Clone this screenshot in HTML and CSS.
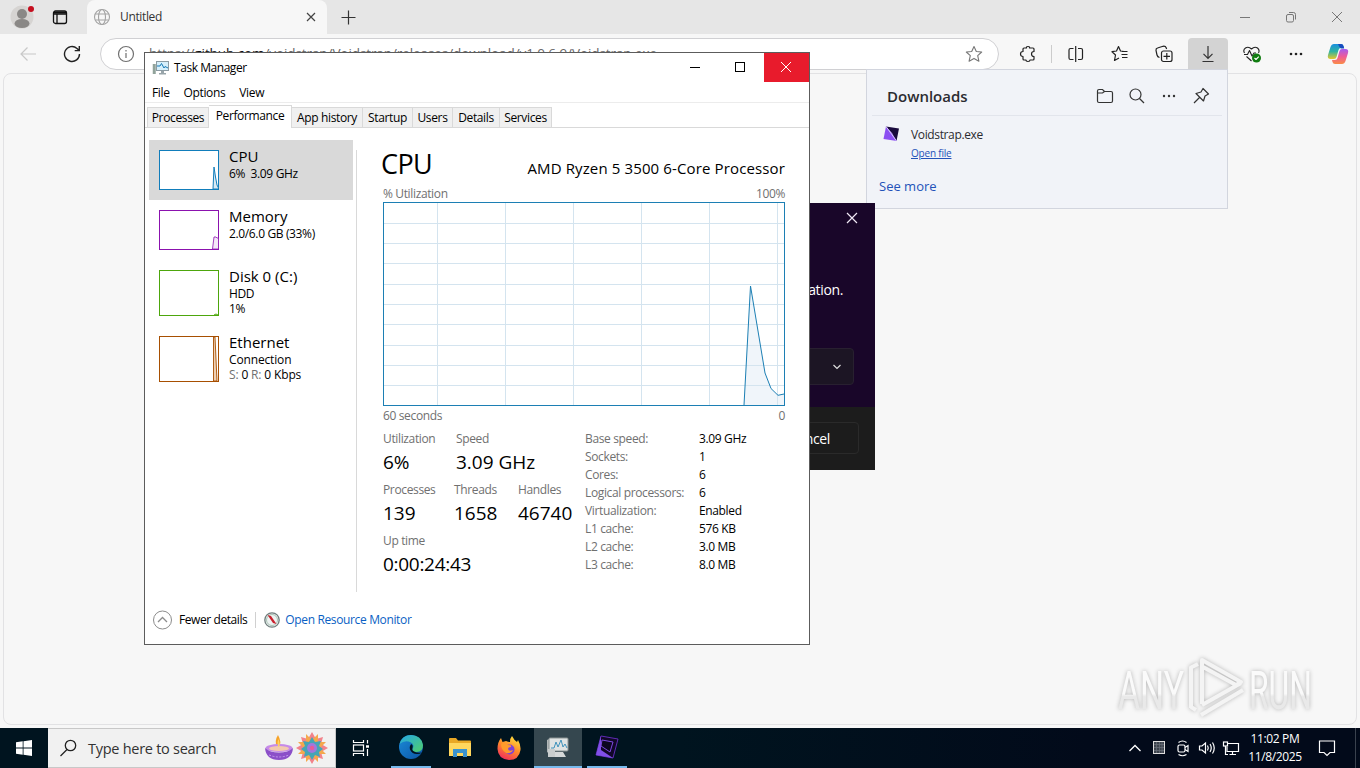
FILE: index.html
```html
<!DOCTYPE html>
<html lang="en">
    <head>
        <meta charset="utf-8">
        <title>Desktop</title>
        <link rel="stylesheet" href="styles.css">
    </head>
    <body>
        <!-- Browser -->
        <div class="browser">
            <div class="tabbar">
                <svg class="avatar" width="26" height="28" viewBox="0 0 26 28"><circle cx="13" cy="14" r="11.500" fill="#d6d4d2"/><circle cx="13" cy="11" r="5" fill="#8a8886"/><ellipse cx="13" cy="20.500" rx="7.500" ry="4.500" fill="#8a8886"/><circle cx="22" cy="6" r="3" fill="#c50f1f"/></svg>
                <svg class="workspaces" width="16" height="16" viewBox="0 0 16 16" fill="none" stroke="#111" stroke-width="1.300"><rect x="1.500" y="2" width="13" height="12.500" rx="2"/><path d="M1.500 5H14.500M5 5V14.500"/><path d="M2 3.500H14" stroke-width="2"/></svg>
                <div class="tab">
                    <svg width="18" height="18" viewBox="0 0 18 18" fill="none" stroke="#a3a3a3" stroke-width="1.100"><circle cx="9" cy="9" r="7.500"/><ellipse cx="9" cy="9" rx="3.500" ry="7.500"/><path d="M2.300 6H15.700M2.300 12H15.700"/></svg>
                    <span class="tab-title">Untitled</span>
                    <svg width="10" height="10" viewBox="0 0 10 10" stroke="#444" stroke-width="1.200"><path d="M1 1L9 9M9 1L1 9"/></svg>
                </div>
                <svg class="newtab" width="15" height="15" viewBox="0 0 15 15" stroke="#333" stroke-width="1.200"><path d="M7.500 .5V14.500M.5 7.500H14.500"/></svg>
                <div class="winbtns">
                    <svg width="12" height="12" viewBox="0 0 12 12" stroke="#777" fill="none"><path d="M1 6.500H11"/></svg>
                    <svg width="12" height="12" viewBox="0 0 12 12" stroke="#777" fill="none"><rect x="1.500" y="3.500" width="7" height="7.500" rx="1.500"/><path d="M4 1.500H8.500Q10.500 1.500 10.500 3.500V8.500"/></svg>
                    <svg width="12" height="12" viewBox="0 0 12 12" stroke="#777" fill="none"><path d="M1 1L11 11M11 1L1 11"/></svg>
                </div>
            </div>
            <div class="toolbar">
                <svg class="back" width="18" height="16" viewBox="0 0 18 16" fill="none" stroke="#c8c8c8" stroke-width="1.200"><path d="M17 8H2M8.500 1.500L2 8L8.500 14.500"/></svg>
                <svg class="reload" width="18" height="18" viewBox="0 0 18 18" fill="none" stroke="#222" stroke-width="1.400"><path d="M16.500 9A7.500 7.500 0 1 1 14 3.400L16 5.300M16.300 1V5.600H11.700"/></svg>
                <div class="address">
                    <svg width="18" height="18" viewBox="0 0 18 18" fill="none" stroke="#707070" stroke-width="1.200"><circle cx="9" cy="9" r="7.500"/><path d="M9 8V13M9 5V6.500"/></svg>
                    <span class="url">https://<b>github.com</b>/voidstrap/Voidstrap/releases/download/v1.0.6.9/Voidstrap.exe</span>
                    <svg width="18" height="18" viewBox="0 0 18 18" fill="none" stroke="#777" stroke-width="1.100" stroke-linejoin="round"><path d="M9 1.500L11.300 6.500L16.700 7L12.700 10.700L13.900 16.200L9 13.400L4.100 16.200L5.300 10.700L1.300 7L6.700 6.500Z"/></svg>
                </div>
                <div class="tools">
                    <span class="tool"><svg width="18" height="18" viewBox="0 0 18 18" fill="none" stroke="#222" stroke-width="1.200" stroke-linejoin="round"><path d="M5 3H7.500Q7 1.500 9 1.500T10.500 3H14Q15 3 15 4V6.500Q12.500 6.500 12.500 9T15 11.500V14Q15 15 14 15H11Q11 16.500 9 16.500T7 15H5Q4 15 4 14V11.500Q1.500 11.500 1.500 9T4 6.500V4Q4 3 5 3Z"/></svg></span>
                    <i class="sep"></i>
                    <span class="tool"><svg width="18" height="18" viewBox="0 0 18 18" fill="none" stroke="#222" stroke-width="1.200"><path d="M6.500 3.500H3.500Q2 3.500 2 5V13Q2 14.500 3.500 14.500H6.500M11 3.500H14Q15.500 3.500 15.500 5V13Q15.500 14.500 14 14.500H11M8.700 1V17"/></svg></span>
                    <span class="tool"><svg width="18" height="18" viewBox="0 0 18 18" fill="none" stroke="#222" stroke-width="1.200" stroke-linejoin="round"><path d="M13 6.500L9.500 6L7.500 1.500L5.500 6L1 6.700L4.500 10L3.500 15.500L8 13M11 6.500H16.500M10.500 9.500H16.500M11 12.500H16.500"/></svg></span>
                    <span class="tool"><svg width="18" height="18" viewBox="0 0 18 18" fill="none" stroke="#222" stroke-width="1.200"><rect x="6.500" y="6" width="10.500" height="10.500" rx="2"/><path d="M4.500 12.500Q2.500 12 2 10L1 5.500Q.7 3.500 2.500 3L8 1.300Q10.500 .8 11.300 3L11.600 4M11.800 8V14.500M8.500 11.300H15"/></svg></span>
                    <span class="tool active"><svg width="18" height="18" viewBox="0 0 18 18" fill="none" stroke="#333" stroke-width="1.200"><path d="M9 1V13M4.500 8.800L9 13.300L13.500 8.800M3.500 16.500H14.500"/></svg></span>
                    <span class="tool"><svg width="20" height="18" viewBox="0 0 20 18" fill="none" stroke="#222" stroke-width="1.100" stroke-linejoin="round"><path d="M2.500 8Q.7 5 3.500 3Q6.500 1 9.500 4Q12.500 1 15.500 3Q18 5 16.500 8M2 9.500H5.500L7.500 5.500L10 11L12 8H14M4.500 11.500L9.500 16"/><circle cx="14.500" cy="13" r="4.500" fill="#107c10" stroke="none"/><path d="M12.500 13L14 14.500L16.800 11.700" stroke="#fff"/></svg></span>
                    <span class="tool"><svg width="16" height="4" viewBox="0 0 16 4" fill="#222"><circle cx="3" cy="2" r="1.300"/><circle cx="8" cy="2" r="1.300"/><circle cx="13" cy="2" r="1.300"/></svg></span>
                    <span class="tool copilot"><svg width="22" height="22" viewBox="0 0 22 22"><defs><linearGradient id="cpA" x1="0" y1="0" x2="0" y2="1"><stop offset="0" stop-color="#1a8fe0"/><stop offset=".5" stop-color="#30b4a0"/><stop offset="1" stop-color="#e8c82c"/></linearGradient><linearGradient id="cpB" x1="0" y1="0" x2="0" y2="1"><stop offset="0" stop-color="#a55cf0"/><stop offset=".5" stop-color="#ee5c98"/><stop offset="1" stop-color="#fa8c46"/></linearGradient></defs><path d="M7 1H14Q16 1 16.500 3L17 5H14Q12 5 11.500 7L9.500 14Q9 16 7 16H3.500Q0 16 1 12L3.500 4Q4.500 1 7 1Z" fill="url(#cpA)"/><path d="M11 1H14Q16 1 16.500 3L17.200 5.500H14Q12.500 5 11 1Z" fill="#174cbe"/><path d="M15 6H18.500Q22 6 21 10L18.500 18Q17.500 21 15 21H8Q6 21 5.500 19L5 17H8Q10 17 10.500 15L12.500 8Q13 6 15 6Z" fill="url(#cpB)"/></svg></span>
                </div>
            </div>
            <div class="page"></div>
        </div>

        <!-- Downloads flyout -->
        <div class="downloads">
            <div class="dl-head">
                <h2>Downloads</h2>
                <svg width="18" height="18" viewBox="0 0 18 18" fill="none" stroke="#333" stroke-width="1.200"><path d="M1.500 4Q1.500 2.500 3 2.500H6.500L8.500 4.500H15Q16.500 4.500 16.500 6V14Q16.500 15.500 15 15.500H3Q1.500 15.500 1.500 14ZM1.500 6H6.500L8.500 4.500"/></svg>
                <svg width="18" height="18" viewBox="0 0 18 18" fill="none" stroke="#333" stroke-width="1.200"><circle cx="7.500" cy="7.500" r="5.500"/><path d="M11.500 11.500L16 16"/></svg>
                <svg width="18" height="18" viewBox="0 0 18 18" fill="#333"><circle cx="4" cy="9" r="1.200"/><circle cx="9" cy="9" r="1.200"/><circle cx="14" cy="9" r="1.200"/></svg>
                <svg width="18" height="18" viewBox="0 0 18 18" fill="none" stroke="#333" stroke-width="1.200" stroke-linejoin="round"><path d="M11 1.500L16.500 7L13 9L11.500 14L4 6.500L9 5ZM7.500 10.500L2 16"/></svg>
            </div>
            <div class="dl-item">
                <svg width="18" height="18" viewBox="0 0 18 18"><path d="M4 1.500L10 8L15 16L1.500 14Z" fill="#8c4ff2"/><path d="M4 1.500L17 3.500L14.500 16L10 8Z" fill="#190a3d"/><path d="M4 1.500L14.500 16" stroke="#d9c7ff"/></svg>
                <div>
                    <div class="dl-name">Voidstrap.exe</div>
                    <a class="dl-open">Open file</a>
                </div>
            </div>
            <a class="dl-more">See more</a>
        </div>

        <!-- Installer dialog, mostly under the task manager -->
        <div class="dialog">
            <svg class="dlg-close" width="12" height="12" viewBox="0 0 12 12" stroke="#f0e8f5" stroke-width="1.200"><path d="M1 1L11 11M11 1L1 11"/></svg>
            <p class="dlg-text">application.</p>
            <div class="dlg-select"><svg width="8" height="6" viewBox="0 0 8 6" fill="none" stroke="#ddd" stroke-width="1.200"><path d="M.5 1L4 4.500L7.500 1"/></svg></div>
            <div class="dlg-foot"><span class="dlg-btn">Cancel</span></div>
        </div>

        <!-- Task manager -->
        <div class="taskmgr">
            <div class="tm-title">
                <svg width="17" height="16" viewBox="0 0 17 16"><rect x="4.500" y="1.500" width="12" height="9" fill="#d5effb" stroke="#8b9ba3"/><path d="M5 6H8L9.500 3.500L12 8L13 6.500L16 8" fill="none" stroke="#1679b5"/><path d="M9 11H12V13H14V14.500H7V13H9Z" fill="#99a5aa"/><path d="M1.500 4V14M3 4V14" stroke="#91a39b" stroke-width="1.500"/></svg>
                <span>Task Manager</span>
                <div class="tm-btns">
                    <i><svg width="12" height="12" viewBox="0 0 12 12" stroke="#000"><path d="M1 6.500H11"/></svg></i>
                    <i><svg width="12" height="12" viewBox="0 0 12 12" stroke="#000" fill="none"><rect x="1.500" y="1.500" width="9" height="9"/></svg></i>
                    <i class="close"><svg width="12" height="12" viewBox="0 0 12 12" stroke="#fff"><path d="M1 1L11 11M11 1L1 11"/></svg></i>
                </div>
            </div>
            <div class="tm-menu"><span>File</span><span>Options</span><span>View</span></div>
            <div class="tm-tabs">
                <span class="t1">Processes</span><span class="t2 on">Performance</span><span class="t3">App history</span><span class="t4">Startup</span><span class="t5">Users</span><span class="t6">Details</span><span class="t7">Services</span>
            </div>
            <div class="tm-body">
                <div class="side">
                    <div class="res selected">
                        <svg width="60" height="40" viewBox="0 0 60 40"><rect x=".5" y=".5" width="59" height="39" fill="#fff" stroke="#117dbb"/><path d="M54 39L55 17L56.500 27L58 35L59.500 38V39Z" fill="#d9eaf4" stroke="#117dbb"/></svg>
                        <div><h3>CPU</h3><p>6%&nbsp; 3.09 GHz</p></div>
                    </div>
                    <div class="res">
                        <svg width="60" height="40" viewBox="0 0 60 40"><rect x=".5" y=".5" width="59" height="39" fill="#fff" stroke="#8b12ae"/><path d="M53.500 39L55 27H57L58 28H59.500V39Z" fill="#f4e8f8" stroke="#8b12ae" stroke-width=".8"/></svg>
                        <div><h3>Memory</h3><p>2.0/6.0 GB (33%)</p></div>
                    </div>
                    <div class="res tall">
                        <svg width="60" height="46" viewBox="0 0 60 46"><rect x=".5" y=".5" width="59" height="45" fill="#fff" stroke="#4da60c"/><path d="M55 45L57 44L59 45" fill="none" stroke="#4da60c"/></svg>
                        <div><h3>Disk 0 (C:)</h3><p>HDD</p><p>1%</p></div>
                    </div>
                    <div class="res tall">
                        <svg width="60" height="46" viewBox="0 0 60 46"><rect x=".5" y=".5" width="59" height="45" fill="#fff" stroke="#a74f01"/><path d="M54.500 45V1H56L58 45Z" fill="#eed0b5" stroke="#a74f01" stroke-width=".9"/></svg>
                        <div><h3>Ethernet</h3><p class="net">Connection</p><p class="net"><em>S:</em> 0 <em>R:</em> 0 Kbps</p></div>
                    </div>
                </div>
                <div class="main">
                    <div class="m-head"><h1>CPU</h1><span>AMD Ryzen 5 3500 6-Core Processor</span></div>
                    <div class="m-cap"><span>% Utilization</span><span>100%</span></div>
                    <svg class="graph" width="402" height="204" viewBox="0 0 402 204">
                        <rect x=".5" y=".5" width="401" height="203" fill="#fff"/>
                        <path d="M361 203L367.500 84L375 129L382 171L388 186.500L395 193.300L401 192V203Z" fill="#f0f5fa"/>
                        <path d="M54.500 1V203M122.500 1V203M190.500 1V203M258.500 1V203M326.500 1V203M394.500 1V203M1 21.500H401M1 41.500H401M1 61.500H401M1 82.500H401M1 102.500H401M1 122.500H401M1 143.500H401M1 163.500H401M1 183.500H401" stroke="#d4e4ef" fill="none"/>
                        <path d="M361 203L367.500 84L375 129L382 171L388 186.500L395 193.300L401 192" fill="none" stroke="#1c7fb4"/>
                        <rect x=".5" y=".5" width="401" height="203" fill="none" stroke="#1c7fb4"/>
                    </svg>
                    <div class="m-cap bottom"><span>60 seconds</span><span>0</span></div>
                    <div class="stats">
                        <div class="big">
                            <div class="row"><div class="c73"><label>Utilization</label><strong>6%</strong></div><div><label>Speed</label><strong>3.09 GHz</strong></div></div>
                            <div class="row"><div class="c71"><label>Processes</label><strong>139</strong></div><div class="c64"><label>Threads</label><strong>1658</strong></div><div><label>Handles</label><strong>46740</strong></div></div>
                            <div class="row"><div><label>Up time</label><strong class="time">0:00:24:43</strong></div></div>
                        </div>
                        <div class="specs">
                            <span>Base speed:</span><b>3.09 GHz</b>
                            <span>Sockets:</span><b>1</b>
                            <span>Cores:</span><b>6</b>
                            <span>Logical processors:</span><b>6</b>
                            <span>Virtualization:</span><b>Enabled</b>
                            <span>L1 cache:</span><b>576 KB</b>
                            <span>L2 cache:</span><b>3.0 MB</b>
                            <span>L3 cache:</span><b>8.0 MB</b>
                        </div>
                    </div>
                </div>
            </div>
            <div class="tm-foot">
                <svg width="20" height="20" viewBox="0 0 20 20" fill="none" stroke="#8c8c8c"><circle cx="10.500" cy="10" r="9"/><path d="M6 12L10.500 7.500L15 12" stroke-width="1.300"/></svg>
                <span class="fewer">Fewer details</span>
                <i class="fsep"></i>
                <svg width="16" height="16" viewBox="0 0 16 16"><circle cx="8" cy="8" r="7.200" fill="#eef2f2" stroke="#6f7d7d" stroke-width="1.300"/><circle cx="8" cy="8" r="5.500" fill="none" stroke="#a9c4b5"/><path d="M3.500 3L7 4L12.500 12L9 11Z" fill="#c8202c"/></svg>
                <a>Open Resource Monitor</a>
            </div>
        </div>

        <!-- Watermark -->
        <svg class="watermark" width="250" height="72" viewBox="0 0 250 72">
            <defs><linearGradient id="wm" x1="0" y1="0" x2="0" y2="1"><stop offset=".55" stop-color="#fafafa"/><stop offset=".6" stop-color="#e9e9e9"/></linearGradient></defs>
            <g class="wm-text" fill="url(#wm)">
                <text x="8" y="56.500" textLength="66" lengthAdjust="spacingAndGlyphs">ANY</text>
                <text x="139" y="56.500" textLength="63" lengthAdjust="spacingAndGlyphs">RUN</text>
            </g>
            <g class="wm-mark">
                <path d="M81 56V15M81 55L86 58M80 16L88 12"/>
                <path d="M92 52V8L131 30L126 33L93 15M92 53L131 31M91 63L133 38"/>
            </g>
        </svg>

        <!-- Taskbar -->
        <div class="taskbar">
            <div class="start"><svg width="16" height="16" viewBox="0 0 16 16" fill="#fff"><path d="M0 2.300L6.700 1.300V7.600H0ZM7.500 1.200L16 0V7.600H7.500ZM0 8.400H6.700V14.700L0 13.700ZM7.500 8.400H16V16L7.500 14.800Z"/></svg></div>
            <div class="search">
                <svg width="18" height="18" viewBox="0 0 18 18" fill="none" stroke="#222" stroke-width="1.300"><circle cx="10.500" cy="6.500" r="5.200"/><path d="M7 10.500L.5 17"/></svg>
                <span>Type here to search</span>
                <svg width="68" height="36" viewBox="0 0 68 36">
                    <path d="M16 17Q13 11 17 5Q21 12 18 17Z" fill="#f6a329"/><ellipse cx="18" cy="18" rx="13.500" ry="4" fill="#c68ae8"/><ellipse cx="18" cy="18.500" rx="10" ry="2.500" fill="#f3c9ae"/><path d="M4 18Q5 30 18 30T32 18Q27 22.500 18 22.500T4 18Z" fill="#8b4fc8"/><path d="M8 25Q18 29 28 25" stroke="#c69af0" fill="none" stroke-dasharray="2 1.500"/><path d="M17.500 17Q15.500 13 17.500 9Q19.500 14 18 17Z" fill="#ffd35c"/>
                    <g transform="translate(51 18)"><path d="M0-16L4-9L11-11L9-4L16 0L9 4L11 11L4 9L0 16L-4 9L-11 11L-9 4L-16 0L-9-4L-11-11L-4-9Z" fill="#f2828a"/><path d="M6-14L6-6L14-6L8 0L14 6L6 6L6 14L0 8L-6 14L-6 6L-14 6L-8 0L-14-6L-6-6L-6-14L0-8Z" fill="#f4a84c"/><path d="M0-11L3-6L9-7L7-2L11 1L7 4L8 9L3 7L0 12L-3 7L-8 9L-7 4L-11 1L-7-2L-9-7L-3-6Z" fill="#45a5b5"/><circle r="5" fill="#9f78dd"/><circle r="2.200" fill="#e65b98"/></g>
                </svg>
            </div>
            <div class="app"><svg width="18" height="18" viewBox="0 0 18 18" fill="none" stroke="#fff" stroke-width="1.200"><path d="M1.500 1V3.500H11.500V1M1.500 17V14.500H11.500V17M15.500 1V4.500M15.500 10V17"/><rect x="1.500" y="6" width="10" height="6"/><path d="M14 7.500H17" stroke-width="2.500"/></svg></div>
            <div class="app open edge"><svg width="26" height="26" viewBox="0 0 26 26"><defs><linearGradient id="eg1" x1="0" y1="0" x2="1" y2="1"><stop offset="0" stop-color="#24a7e8"/><stop offset="1" stop-color="#51cf69"/></linearGradient><linearGradient id="eg2" x1="0" y1="0" x2="1" y2="1"><stop offset="0" stop-color="#1b8bd8"/><stop offset="1" stop-color="#0b54a5"/></linearGradient></defs><circle cx="13" cy="13" r="12" fill="url(#eg2)"/><path d="M1.500 10Q4 1 13 1Q23 1 25 11Q25 18 18.500 18Q14 18 14.500 15Q17 11 13 8.500Q7 5.500 1.500 10Z" fill="url(#eg1)"/><path d="M13.500 10Q11 12 12 15.500Q14 20 19 20Q22 20 24 18.500Q19 19.500 16 17.500Q13.500 16 14.500 14Q15.500 11.500 13.500 10Z" fill="#00141e"/></svg></div>
            <div class="app"><svg width="22" height="20" viewBox="0 0 22 20"><path d="M0 1Q0 0 1 0H7L9 2.500H21Q22 2.500 22 3.500V18H0Z" fill="#e9a825"/><path d="M0 5H22V18H0Z" fill="#ffd75e"/><path d="M4 11H18V19H14V15H8V19H4Z" fill="#3a93cf"/></svg></div>
            <div class="app"><svg width="24" height="24" viewBox="0 0 24 24"><defs><linearGradient id="ff" x1=".8" y1="0" x2=".3" y2="1"><stop offset="0" stop-color="#ffe63e"/><stop offset=".5" stop-color="#ff8a2a"/><stop offset="1" stop-color="#f22d5d"/></linearGradient></defs><path d="M15 0Q17 4 20 6L21 4Q24 9 23.500 14Q22 24 12 24Q1 23 .5 13Q.5 6 4 2L5.500 6L9 5Q11 6 13 6Q13 2 15 0Z" fill="url(#ff)"/><circle cx="12.500" cy="13.500" r="5" fill="#7e41d8"/><path d="M4 8Q8 5 11 9Q15 9 14 11Q11 11 11 13Q12 16 16 14Q14 18 9 17Q4 14 4 8Z" fill="#ff9b2b"/></svg></div>
            <div class="app open current"><svg width="24" height="24" viewBox="0 0 24 24"><path d="M1 5L5 3V20L1 17Z" fill="#b1b7b7"/><rect x="3" y="3" width="19" height="13" rx="1" fill="#dfe3e3" stroke="#8b9393"/><path d="M5 13H8L10 7L12 12L15 5L17 12L19 9L21 13" fill="none" stroke="#3f92bc"/><path d="M9 17H17L20 22H9Z" fill="#d5d8d8"/><path d="M2 14H9V22H2Z" fill="#c9cdcd"/></svg></div>
            <div class="app open void"><svg width="26" height="26" viewBox="0 0 26 26"><path d="M7 2L24 5L19 24L2 21Z" fill="#110728" stroke="#5f2bb5"/><path d="M7 2L2 21L19 24L7 16Z" fill="#8050e8"/><path d="M8 6L19 8L16 18L7 12Z" fill="#0c0620" stroke="#7c4ade"/></svg></div>
            <div class="tray">
                <svg width="24" height="18" viewBox="0 0 24 18" fill="none" stroke="#fff" stroke-width="1.300"><path d="M6.500 12L12 6.500L17.500 12"/></svg>
                <svg width="24" height="18" viewBox="0 0 24 18" fill="none" stroke="#ddd"><rect x="6.500" y="2.500" width="11" height="12" fill="#3c434d"/><path d="M9.500 3V14M12.500 3V14M15 3V14M7 5.500H17M7 8.500H17M7 11.500H17" stroke="#6a717b" stroke-width=".7"/></svg>
                <svg width="24" height="18" viewBox="0 0 24 18" fill="none" stroke="#fff" stroke-width="1.200"><rect x="7" y="6" width="7" height="7" rx="1.500"/><path d="M14 8.500L17 6.500V12.500L14 10.500M7.500 3.500Q11.500 .5 15.500 3.500M7.500 15.500Q11.500 18 15.500 15.500"/></svg>
                <svg width="24" height="18" viewBox="0 0 24 18" fill="none" stroke="#fff" stroke-width="1.200"><path d="M4.500 7H7L10.500 4V14L7 11H4.500ZM12.500 6.500Q14 9 12.500 11.500M15 5Q17.500 9 15 13M17.500 3.500Q21 9 17.500 14.500"/></svg>
                <svg width="24" height="18" viewBox="0 0 24 18" fill="none" stroke="#fff" stroke-width="1.200"><path d="M9 4.500H19.500V12.500H8V8M13.500 12.500V15.500M10.500 15.500H17"/><rect x="4.500" y="3" width="4" height="4"/><path d="M6.500 7V15.500H9"/></svg>
                <div class="clock"><span>11:02 PM</span><span>11/8/2025</span></div>
                <svg class="note" width="18" height="18" viewBox="0 0 18 18" fill="none" stroke="#fff" stroke-width="1.200"><path d="M1.500 2H16.500V13.500H12L9 16.500L6 13.500H1.500Z"/></svg>
            </div>
        </div>
    </body>
</html>
```
FILE: styles.css
```css
* {
    box-sizing: border-box;
}

body {
    margin: 0;
    width: 1360px;
    height: 768px;
    overflow: hidden;
    display: flex;
    flex-direction: column;
    position: relative;
    font-family: "Open Sans", "Noto Sans", sans-serif;
    font-size: 12px;
    letter-spacing: -0.03em;
    color: #000;
    white-space: nowrap;
}

svg {
    flex: none;
    display: block;
}

h1, h2, h3, p {
    margin: 0;
    font-weight: normal;
}

/* browser */
.browser {
    height: 728px;
    flex: none;
    display: flex;
    flex-direction: column;
    background-color: #f7f7f7;
}

.tabbar {
    height: 34px;
    display: flex;
    align-items: center;
    background-color: #e6e6e6;
}

.avatar {
    margin-left: 9px;
}

.workspaces {
    margin: 0 19px 0 17px;
}

.tab {
    width: 240px;
    height: 34px;
    padding: 0 11px 0 6px;
    display: flex;
    align-items: center;
    background-color: #f7f7f7;
    border-radius: 8px 8px 0 0;
}

.tab-title {
    flex: 1;
    margin-left: 9px;
    padding-bottom: 2px;
    color: #333;
}

.newtab {
    margin-left: 14px;
}

.winbtns {
    margin-left: auto;
    margin-right: 17px;
    display: flex;
    gap: 34px;
}

.toolbar {
    height: 39px;
    padding: 4px 0 3px;
    display: flex;
    align-items: center;
}

.back {
    margin-left: 19px;
}

.reload {
    margin: 0 19px 0 26px;
}

.address {
    width: 899px;
    height: 32px;
    padding: 0 15px 0 16px;
    display: flex;
    align-items: center;
    background-color: #fff;
    border: 1px solid #d0d0d3;
    border-radius: 16px;
}

.url {
    flex: 1;
    margin-left: 14px;
    padding-bottom: 3px;
    color: #666;
    font-size: 13.5px;
    letter-spacing: -0.09px;
}

.url b {
    font-weight: normal;
    color: #111;
}

.tools {
    margin-left: 7px;
    height: 32px;
    display: flex;
    align-items: center;
}

.tool {
    width: 44px;
    height: 32px;
    display: flex;
    align-items: center;
    justify-content: center;
}

.tool.active {
    width: 40px;
    margin: 0 2px;
    background-color: #d3d3d3;
    border-radius: 4px 4px 0 0;
}

.tool.copilot {
    width: 40px;
}

.sep {
    width: 1px;
    height: 18px;
    margin: 0 2px 0 1px;
    background-color: #ccc;
}

.page {
    flex: 1;
    margin: 0 3px 3px;
    border: 1px solid #e2e2e4;
    border-radius: 8px;
    background-color: #f7f7f7;
}

/* downloads */
.downloads {
    position: absolute;
    left: 866px;
    top: 69px;
    width: 362px;
    height: 140px;
    border: 1px solid #d2d5de;
    background-color: #f1f3f8;
}

.dl-head {
    height: 46px;
    margin: 0 5px;
    padding: 6px 12px 0 15px;
    display: flex;
    align-items: center;
    gap: 14px;
    border-bottom: 1px solid #e2e5ec;
}

.dl-head h2 {
    flex: 1;
    font-size: 15px;
    font-weight: 600;
    letter-spacing: 0;
    color: #2b2b30;
}

.dl-item {
    display: flex;
    padding: 9px 0 0 15px;
    gap: 11px;
}

.dl-name {
    margin-top: 1px;
    line-height: 18px;
    color: #2b2b30;
}

.dl-open {
    display: block;
    margin-top: 1px;
    line-height: 16px;
    font-size: 10px;
    letter-spacing: -0.2px;
    color: #2352b8;
    text-decoration: underline;
}

.dl-more {
    display: block;
    margin: 16px 0 0 12px;
    line-height: 18px;
    font-size: 13px;
    color: #2352b8;
    letter-spacing: 0;
}

/* dialog */
.dialog {
    position: absolute;
    left: 475px;
    top: 203px;
    width: 400px;
    height: 267px;
    display: flex;
    flex-direction: column;
    align-items: flex-end;
    background-color: #190629;
    color: #fff;
    font-size: 14px;
}

.dlg-close {
    margin: 9px 17px 0 0;
}

.dlg-text {
    margin: 56px 32px 0 0;
    line-height: 20px;
}

.dlg-select {
    width: 200px;
    height: 37px;
    margin: 48px 21px 22px 0;
    padding-right: 12px;
    display: flex;
    align-items: center;
    justify-content: flex-end;
    background-color: #1c1524;
    border: 1px solid #282030;
    border-radius: 4px;
}

.dlg-foot {
    flex: 1;
    width: 100%;
    padding: 15px 16px;
    display: flex;
    justify-content: flex-end;
    align-items: flex-start;
    background-color: #1c1c1c;
}

.dlg-btn {
    width: 100px;
    height: 32px;
    padding-right: 28px;
    line-height: 31px;
    text-align: right;
    border: 1px solid #2a2a2a;
    border-radius: 4px;
}

/* task manager */
.taskmgr {
    position: absolute;
    left: 144px;
    top: 52px;
    width: 666px;
    height: 593px;
    display: flex;
    flex-direction: column;
    background-color: #fff;
    border: 1px solid #5c5c5c;
}

.tm-title {
    height: 30px;
    padding-left: 7px;
    display: flex;
    align-items: center;
}

.tm-title span {
    margin-left: 5px;
    padding-bottom: 1px;
    line-height: 14px;
    letter-spacing: -0.45px;
}

.tm-btns {
    margin-left: auto;
    align-self: flex-start;
    display: flex;
}

.tm-btns i {
    width: 45px;
    height: 29px;
    padding: 0 3px 1px 0;
    display: flex;
    align-items: center;
    justify-content: center;
}

.tm-btns .close {
    padding-right: 1px;
    background-color: #e81b2c;
}

.tm-menu {
    height: 20px;
    padding-left: 7px;
    display: flex;
    align-items: center;
    gap: 14px;
    border-bottom: 1px solid #ececec;
}

.tm-tabs {
    height: 25px;
    padding-left: 2px;
    display: flex;
    align-items: flex-end;
    border-bottom: 1px solid #d9d9d9;
}

.tm-tabs span {
    height: 20px;
    line-height: 20px;
    text-align: center;
    background-color: #f0f0f0;
    border: 1px solid #d9d9d9;
    border-left: 0;
    border-bottom: 0;
}

.tm-tabs .on {
    height: 23px;
    margin-bottom: -1px;
    background-color: #fff;
}

.tm-tabs .t1 { width: 62px; border-left: 1px solid #d9d9d9; }
.tm-tabs .t2 { width: 83px; }
.tm-tabs .t3 { width: 71px; }
.tm-tabs .t4 { width: 50px; }
.tm-tabs .t5 { width: 40px; }
.tm-tabs .t6 { width: 47px; }
.tm-tabs .t7 { width: 52px; }

.tm-body {
    height: 464px;
    padding: 12px 24px 0 4px;
    display: flex;
}

.side {
    width: 204px;
}

.res {
    height: 60px;
    padding: 10px 0 0 10px;
    display: flex;
    gap: 10px;
}

.res.tall {
    height: 66px;
}

.res.selected {
    background-color: #d9d9d9;
}

.res h3 {
    margin-top: -4px;
    font-size: 15px;
    line-height: 20px;
    letter-spacing: 0;
}

.res p {
    line-height: 15px;
}

.res .net {
    letter-spacing: -0.15px;
}

.res em {
    font-style: normal;
    color: #707070;
}

.main {
    width: 429px;
    margin: 10px 0 0 3px;
    padding-left: 26px;
    border-left: 1px solid #d9d9d9;
}

.m-head {
    height: 34px;
    display: flex;
    justify-content: space-between;
}

.m-head h1 {
    margin-left: -2px;
    font-size: 27px;
    line-height: 28px;
    letter-spacing: -0.6px;
}

.m-head span {
    font-size: 15px;
    line-height: 36px;
    letter-spacing: 0.13px;
}

.m-cap {
    height: 18px;
    line-height: 19px;
    display: flex;
    justify-content: space-between;
    color: #707070;
}

.stats {
    display: flex;
    margin-top: 6px;
}

.big {
    width: 202px;
}

.row {
    height: 51px;
    display: flex;
}

.c73 { width: 73px; }
.c71 { width: 71px; }
.c64 { width: 64px; }

label {
    display: block;
    line-height: 18px;
    color: #707070;
}

strong {
    display: block;
    font-weight: normal;
    font-size: 19px;
    line-height: 28px;
    letter-spacing: 0;
}

strong.time {
    letter-spacing: -0.3px;
}

.specs {
    display: grid;
    grid-template-columns: 114px auto;
    grid-auto-rows: 18px;
    align-content: start;
    line-height: 18px;
}

.specs span {
    color: #707070;
}

.specs b {
    font-weight: normal;
}

.tm-foot {
    flex: 1;
    padding: 3px 0 0 7px;
    display: flex;
    align-items: center;
}

.fewer {
    margin: 0 8px 0 7px;
    letter-spacing: -0.42px;
}

.fsep {
    width: 1px;
    height: 16px;
    margin-right: 8px;
    background-color: #d0d0d0;
}

.tm-foot a {
    margin-left: 5px;
    color: #0a5fc4;
}

/* watermark */
.watermark {
    position: absolute;
    left: 1110px;
    top: 652px;
    filter: drop-shadow(0 0 2px #b4b4b4);
}

.wm-text {
    font-family: Roboto, sans-serif;
    font-size: 53px;
    letter-spacing: 0;
}

.wm-mark {
    fill: none;
    stroke: #f4f4f4;
    stroke-width: 4;
    stroke-linejoin: round;
}

/* taskbar */
.taskbar {
    height: 40px;
    flex: none;
    display: flex;
    background: linear-gradient(90deg, #00141f, #00141f 50%, #020a1a 80%);
    color: #fff;
}

.start {
    width: 48px;
    display: flex;
    align-items: center;
    justify-content: center;
}

.search {
    width: 288px;
    padding-left: 12px;
    display: flex;
    align-items: center;
    background-color: #f1f1f1;
    border: 1px solid #c8c8c8;
    border-left: 0;
    color: #333;
    font-size: 14.5px;
}

.search span {
    flex: 1;
    margin-left: 10px;
    letter-spacing: -0.27px;
}

.search svg:last-child {
    margin-right: 6px;
}

.app {
    width: 49px;
    display: flex;
    align-items: center;
    justify-content: center;
}

.app.edge {
    width: 40px;
    margin: 0 4px 0 6px;
}

.app.open {
    border-bottom: 2px solid #76b9ed;
}

.app.current {
    width: 48px;
    margin-left: 1px;
    background-color: #35474f;
}

.app.void {
    width: 40px;
    margin-left: 5px;
}

.tray {
    margin-left: auto;
    margin-right: 4px;
    padding-right: 19px;
    display: flex;
    align-items: center;
    border-right: 1px solid #3a424e;
}

.clock {
    width: 64px;
    display: flex;
    flex-direction: column;
    align-items: center;
    line-height: 18px;
}

.note {
    margin-left: 11px;
}
```
